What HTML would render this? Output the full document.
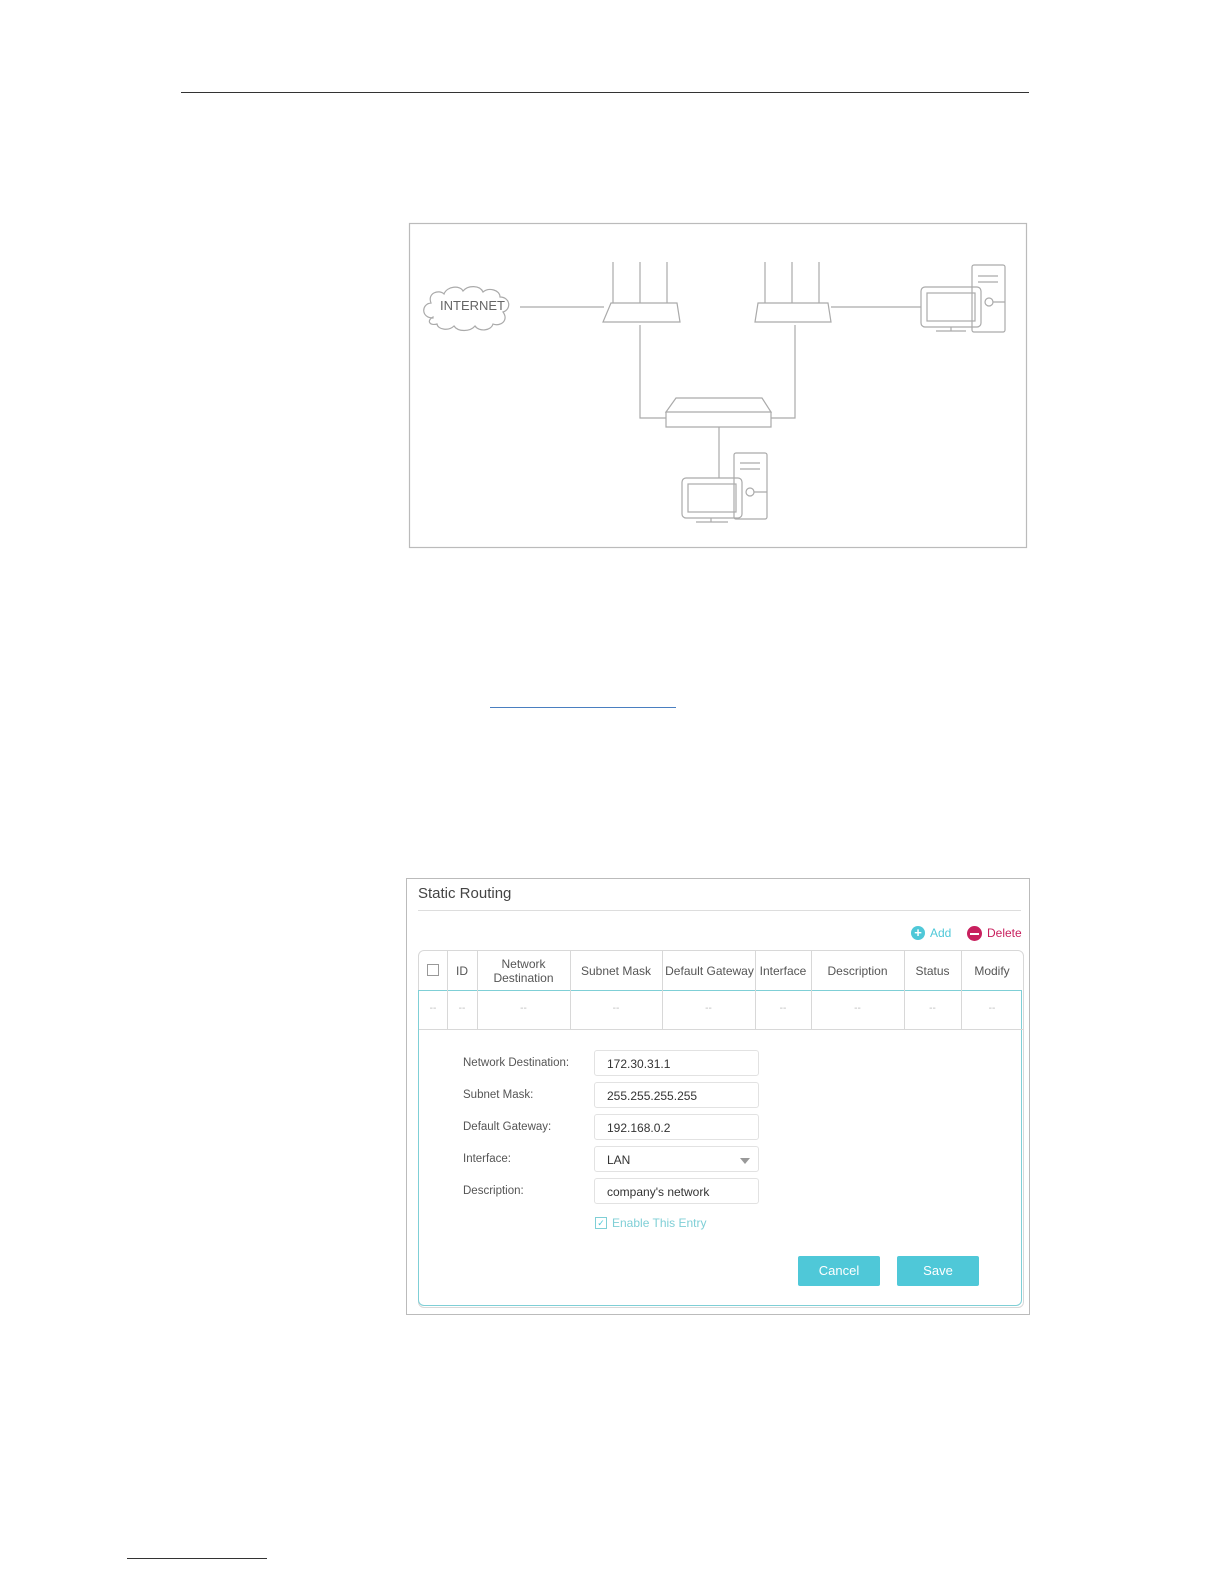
<!DOCTYPE html>
<html><head><meta charset="utf-8"><style>
body{margin:0;width:1224px;height:1584px;background:#fff;position:relative;font-family:"Liberation Sans",sans-serif;overflow:hidden}
.a{position:absolute}
.col{position:absolute;top:0;height:79px;border-left:1px solid #d8d8d8}
.h{position:absolute;top:951px;height:39px;display:flex;align-items:center;justify-content:center;text-align:center;font-size:12px;color:#555;line-height:14px}
.d{position:absolute;top:1003px;font-size:10px;color:#bbb;text-align:center}
.lbl{position:absolute;left:463px;font-size:11.5px;color:#555}
.inp{position:absolute;left:594px;width:165px;height:26px;border:1px solid #e2e2e2;border-radius:3px;font-size:12px;color:#333;line-height:26px;padding-left:12px;box-sizing:border-box}
.btn{position:absolute;top:1256px;width:82px;height:30px;background:#4fc8d8;color:#fff;font-size:13px;text-align:center;line-height:30px;border-radius:2px}
</style></head><body>
<div class="a" style="left:181px;top:92px;width:848px;height:1px;background:#333"></div>
<svg class="a" style="left:0;top:0" width="1224" height="560" fill="none" stroke="#aaa" stroke-width="1.2">
<rect x="409.5" y="223.5" width="617" height="324" stroke="#bbb"/>
<path d="M433 318c-12 0-12-14-2-15c-4-10 8-14 13-9c3-8 16-9 19-3c5-6 17-6 20 1c6-5 17-2 17 5c10 0 12 12 3 15c6 8-2 15-10 12c-2 7-14 8-18 2c-5 6-17 6-21 0c-5 5-16 4-17-2c-7 2-11-3-4-7z"/>
<path d="M520 307H604M831 307H921M640 325V418H666M795 325V418H771M719 427V478"/>
<path d="M613 303V262M640 303V262M667 303V262M765 303V262M792 303V262M819 303V262"/>
<path d="M611 303H677L680 322H603Z M755 322H831L828 303H758Z"/>
<path d="M676 398H762L771 412H666Z M666 412H771V427H666Z"/>
<rect x="972" y="265" width="33" height="67" rx="2"/><path d="M978 276H998M978 282H998M993 302H1005"/><circle cx="989" cy="302" r="4"/>
<rect x="921" y="287" width="60" height="40" rx="4"/><rect x="927" y="293" width="48" height="28"/><path d="M951 327V331M936 331H966"/>
<rect x="734" y="453" width="33" height="66" rx="2"/><path d="M740 463H760M740 469H760M754 492H767"/><circle cx="750" cy="492" r="4"/>
<rect x="682" y="478" width="60" height="40" rx="4"/><rect x="688" y="484" width="48" height="28"/><path d="M711 518V522M696 522H728"/>
</svg>
<text></text>
<div class="a" style="left:425px;top:298px;width:95px;text-align:center;font-size:13px;color:#666">INTERNET</div>
<div class="a" style="left:490px;top:707px;width:186px;height:1px;background:#4a7fc0"></div>

<div class="a" style="left:406px;top:878px;width:622px;height:435px;border:1px solid #bbb"></div>
<div class="a" style="left:418px;top:885px;font-size:15px;color:#444">Static Routing</div>
<div class="a" style="left:418px;top:910px;width:603px;height:1px;background:#ddd"></div>
<div class="a" style="left:911px;top:926px;width:14px;height:14px;border-radius:50%;background:#4fc8d8;color:#fff;font-size:13px;line-height:14px;text-align:center;font-weight:bold">+</div>
<div class="a" style="left:930px;top:926px;font-size:12px;color:#4fc8d8">Add</div>
<div class="a" style="left:967px;top:926px;width:15px;height:15px;border-radius:50%;background:#c8205e"><div style="margin:6.5px 3px;height:2px;background:#fff"></div></div>
<div class="a" style="left:987px;top:926px;font-size:12px;color:#c8205e">Delete</div>

<div class="a" style="left:418px;top:950px;width:604px;height:356px;border:1px solid #d8d8d8;border-radius:6px"></div>
<div class="a" style="left:418px;top:990px;width:604px;height:316px;border:1.5px solid #7fcfd6;border-radius:0 0 6px 6px;box-sizing:border-box"></div>
<div class="a" style="left:419px;top:951px;width:604px;height:79px">
<div class="col" style="left:28px"></div><div class="col" style="left:58px"></div><div class="col" style="left:151px"></div><div class="col" style="left:243px"></div><div class="col" style="left:336px"></div><div class="col" style="left:392px"></div><div class="col" style="left:485px"></div><div class="col" style="left:542px"></div>
</div>
<div class="a" style="left:419px;top:1029px;width:604px;height:1px;background:#d8d8d8"></div>
<div class="a" style="left:427px;top:964px;width:10px;height:10px;border:1px solid #999"></div>
<div class="h" style="left:447px;width:30px">ID</div>
<div class="h" style="left:477px;width:93px">Network<br>Destination</div>
<div class="h" style="left:570px;width:92px">Subnet Mask</div>
<div class="h" style="left:662px;width:95px">Default Gateway</div>
<div class="h" style="left:755px;width:56px">Interface</div>
<div class="h" style="left:811px;width:93px">Description</div>
<div class="h" style="left:904px;width:57px">Status</div>
<div class="h" style="left:961px;width:62px">Modify</div>
<div class="d" style="left:419px;width:28px">--</div><div class="d" style="left:447px;width:30px">--</div><div class="d" style="left:477px;width:93px">--</div><div class="d" style="left:570px;width:92px">--</div><div class="d" style="left:662px;width:93px">--</div><div class="d" style="left:755px;width:56px">--</div><div class="d" style="left:811px;width:93px">--</div><div class="d" style="left:904px;width:57px">--</div><div class="d" style="left:961px;width:62px">--</div>

<div class="lbl" style="top:1057px">Network Destination:</div>
<div class="lbl" style="top:1089px">Subnet Mask:</div>
<div class="lbl" style="top:1121px">Default Gateway:</div>
<div class="lbl" style="top:1153px">Interface:</div>
<div class="lbl" style="top:1185px">Description:</div>
<div class="inp" style="top:1050px">172.30.31.1</div>
<div class="inp" style="top:1082px">255.255.255.255</div>
<div class="inp" style="top:1114px">192.168.0.2</div>
<div class="inp" style="top:1146px">LAN<span style="position:absolute;right:8px;top:11px;border:5px solid transparent;border-top:6px solid #999;border-bottom:0"></span></div>
<div class="inp" style="top:1178px">company's network</div>
<div class="a" style="left:595px;top:1217px;width:10px;height:10px;border:1px solid #7fcfd6;font-size:9px;line-height:10px;color:#4fc8d8;text-align:center">✓</div>
<div class="a" style="left:612px;top:1216px;font-size:12px;color:#7fcfd6">Enable This Entry</div>
<div class="btn" style="left:798px">Cancel</div>
<div class="btn" style="left:897px">Save</div>

<div class="a" style="left:127px;top:1558px;width:140px;height:1px;background:#333"></div>
</body></html>
